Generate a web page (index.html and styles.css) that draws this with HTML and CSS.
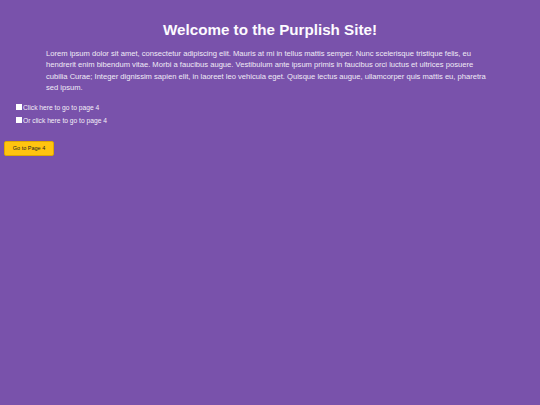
FILE: index.html
```html
<!DOCTYPE html>
<html>
<head>
<meta charset="utf-8">
<link rel="stylesheet" href="styles.css">
</head>
<body>
<div class="page">
  <h1 class="title">Welcome to the Purplish Site!</h1>
  <p class="intro">Lorem ipsum dolor sit amet, consectetur adipiscing elit. Mauris at mi in tellus mattis semper. Nunc scelerisque tristique felis, eu hendrerit enim bibendum vitae. Morbi a faucibus augue. Vestibulum ante ipsum primis in faucibus orci luctus et ultrices posuere cubilia Curae; Integer dignissim sapien elit, in laoreet leo vehicula eget. Quisque lectus augue, ullamcorper quis mattis eu, pharetra sed ipsum.</p>
  <ul class="links">
    <li class="link-item"><span class="box"></span>Click here to go to page 4</li>
    <li class="link-item"><span class="box"></span>Or click here to go to page 4</li>
  </ul>
  <button class="btn">Go to Page 4</button>
</div>
</body>
</html>
```
FILE: styles.css
```css
html, body {
  margin: 0;
  padding: 0;
  background: #7952ab;
}
body {
  font-family: "Liberation Sans", Arial, sans-serif;
  color: #fff;
  width: 540px;
  height: 405px;
}
.page {
  padding: 20px 4px 0 4px;
}
.title {
  margin: 0;
  text-align: center;
  font-size: 15.2px;
  font-weight: bold;
  line-height: 20px;
  color: #fdfbff;
}
.intro {
  margin: 8px 42px 0 42px;
  font-size: 7.6px;
  line-height: 11.4px;
  color: #f0ebf6;
}
.links {
  list-style: none;
  margin: 7px 0 0 12px;
  padding: 0;
}
.link-item {
  display: flex;
  align-items: center;
  font-size: 6.7px;
  line-height: 13px;
  color: #f4f0f8;
}
.box {
  width: 5.5px;
  height: 5.5px;
  background: #fff;
  margin-right: 1.5px;
}
.btn {
  display: block;
  margin-top: 14px;
  width: 50px;
  height: 15px;
  background: #ffc410;
  border: 1px solid #e0a800;
  border-radius: 2px;
  font-family: "Liberation Sans", Arial, sans-serif;
  font-size: 5.5px;
  color: #222;
  padding: 0;
}
```
